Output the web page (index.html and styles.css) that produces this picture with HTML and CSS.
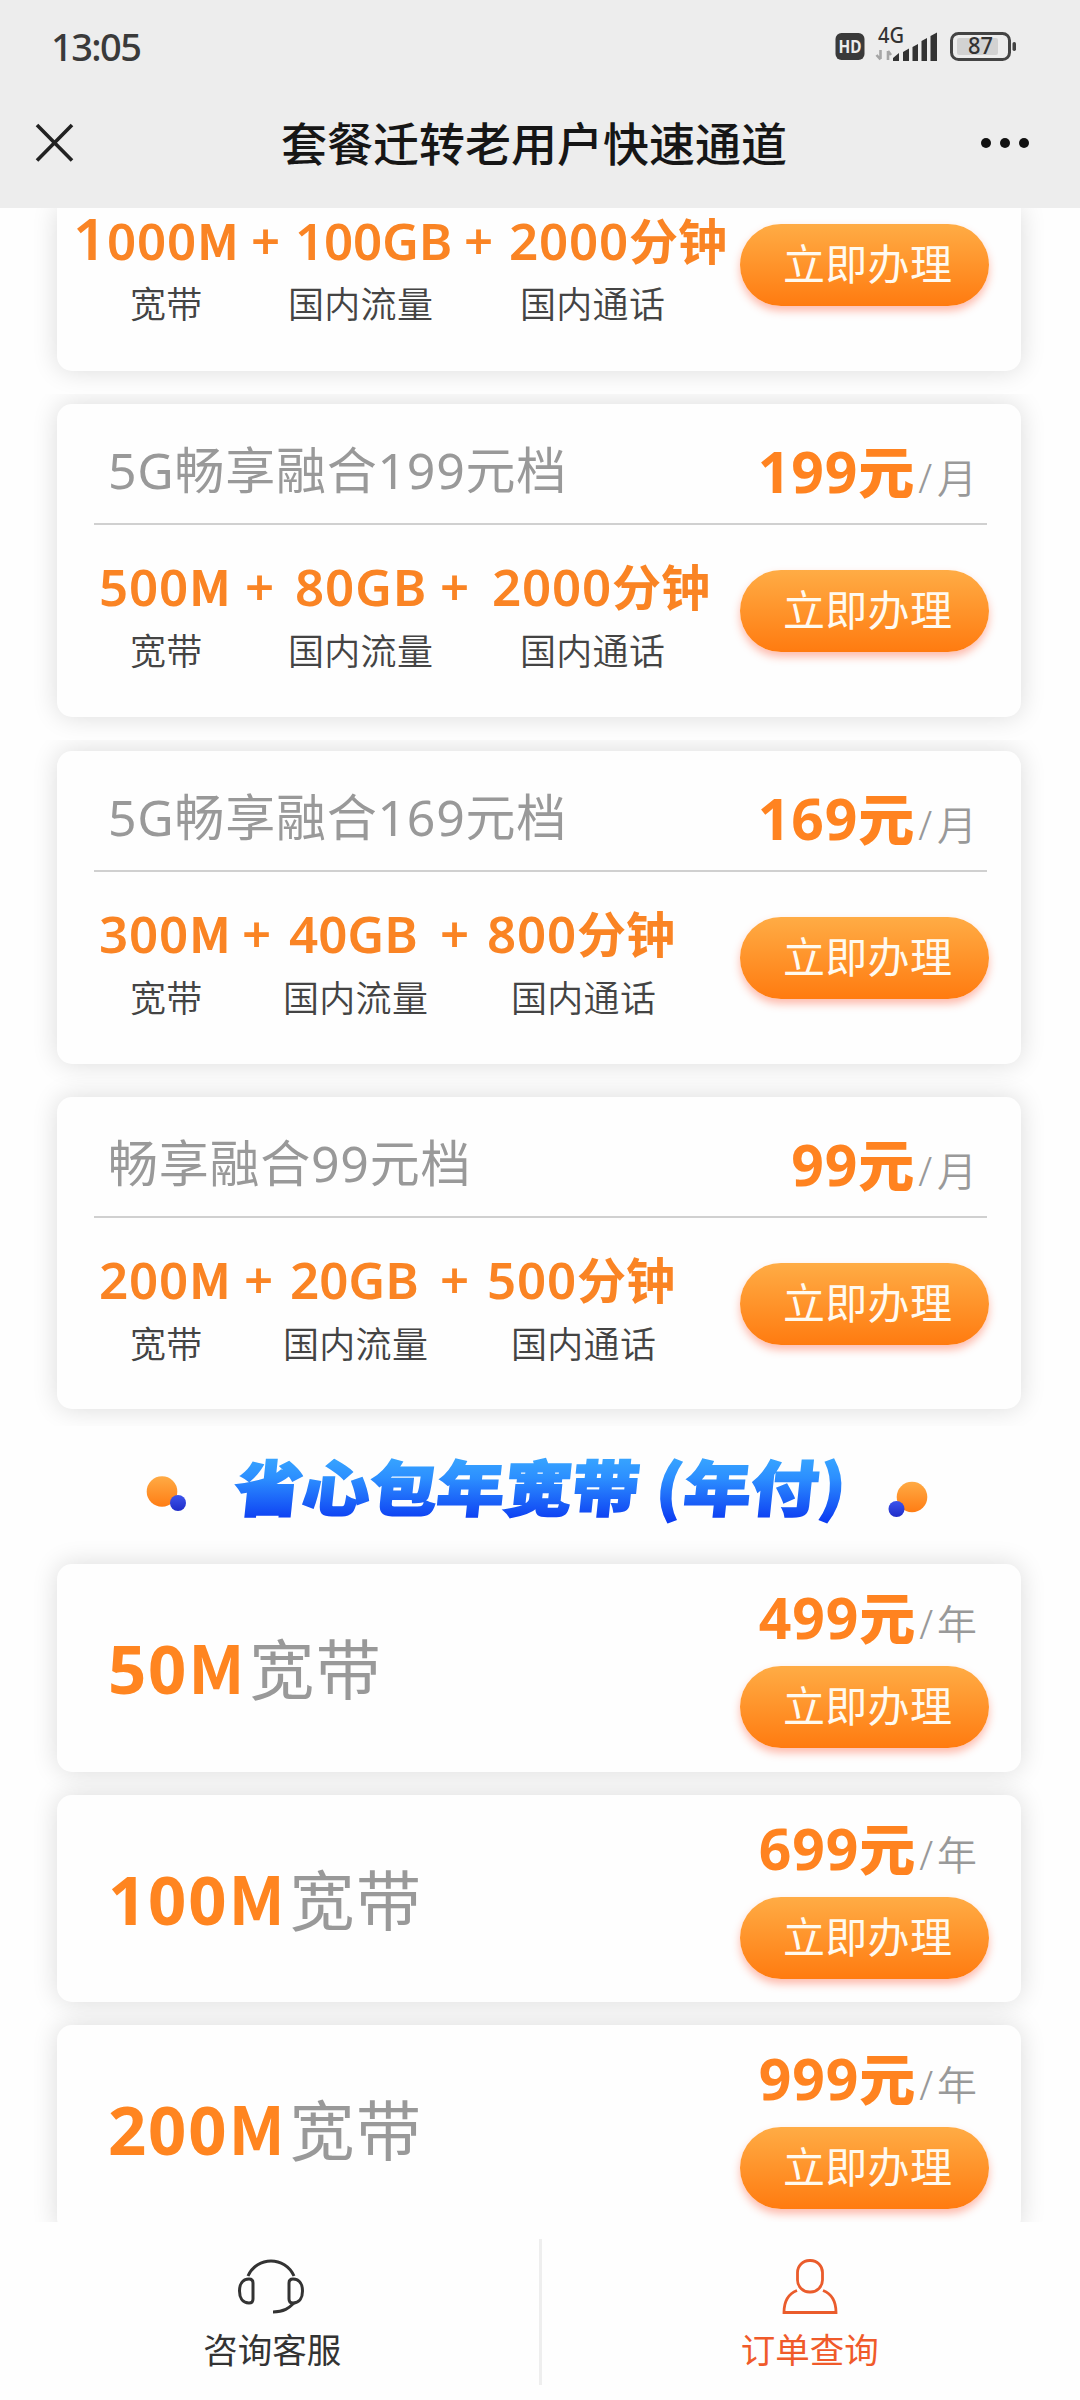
FILE: index.html
```html
<!DOCTYPE html>
<html lang="zh-CN">
<head>
<meta charset="utf-8">
<title>套餐迁转老用户快速通道</title>
<link rel="stylesheet" href="styles.css">
</head>
<body>
<div class="screen">
  <header class="top">
    <div class="status">
      <span class="time">13:05</span>
      <svg class="status-icons" width="190" height="44" viewBox="830 22 190 44">
        <rect x="835.500" y="33" width="29" height="27" rx="6" fill="#3a3a3a"/>
        <text x="850" y="52.500" text-anchor="middle" textLength="23" lengthAdjust="spacingAndGlyphs" class="hd">HD</text>
        <text x="878" y="43" textLength="26" lengthAdjust="spacingAndGlyphs" class="net">4G</text>
        <path d="M880.500 50v9M876.500 55l4 4.500M888 60V51M888 51l3 4" fill="none" stroke="#a5a5a5" stroke-width="2.600"/>
        <path d="M893 61v-3l6-5v8zM903 61v-9l6-3.500v12.500zM912.500 61V47l5.500-3v17zM921.500 61V41l5.500-3v23zM930.500 61V36l6.500-3.500v28.500z" fill="#333"/>
        <rect x="951.500" y="33.500" width="58" height="26" rx="7" fill="none" stroke="#444" stroke-width="3"/>
        <rect x="957" y="38" width="41" height="17" rx="2" fill="#d2d2d2"/>
        <rect x="1012.500" y="42" width="3.500" height="9" rx="1.700" fill="#444"/>
        <text x="980.500" y="54" text-anchor="middle" textLength="25" lengthAdjust="spacingAndGlyphs" class="bat">87</text>
      </svg>
    </div>
    <div class="nav">
      <svg width="40" height="40" viewBox="0 0 40 40"><path d="M2 2l35 35.500M37 2L2 37.500" stroke="#222" stroke-width="3.600" fill="none"/></svg>
      <h1>套餐迁转老用户快速通道</h1>
      <svg width="52" height="12" viewBox="0 0 52 12" fill="#111"><circle cx="7" cy="6" r="5"/><circle cx="26" cy="6" r="5"/><circle cx="45" cy="6" r="5"/></svg>
    </div>
  </header>

  <main class="page">
    <section class="slice slice-a">
      <article class="card cut">
        <div class="body">
          <div class="specs">
            <div class="values v1"><span><big>1</big>000<i>M</i></span><span>+</span><span>100GB</span><span>+</span><span>2000<b>分钟</b></span></div>
            <div class="labels"><span>宽带</span><span>国内流量</span><span>国内通话</span></div>
          </div>
          <a class="btn">立即办理</a>
        </div>
      </article>
    </section>
    <section class="slice slice-b">
      <article class="card">
        <div class="head"><span class="name">5G畅享融合199元档</span><span class="price">199<b>元</b><small>/</small><em>月</em></span></div>
        <div class="body">
          <div class="specs">
            <div class="values v2"><span>500<i>M</i></span><span>+</span><span>80GB</span><span>+</span><span>2000<b>分钟</b></span></div>
            <div class="labels"><span>宽带</span><span>国内流量</span><span>国内通话</span></div>
          </div>
          <a class="btn">立即办理</a>
        </div>
      </article>
    </section>
    <section class="slice slice-c">
      <article class="card">
        <div class="head"><span class="name">5G畅享融合169元档</span><span class="price">169<b>元</b><small>/</small><em>月</em></span></div>
        <div class="body">
          <div class="specs">
            <div class="values v3"><span>300<i>M</i></span><span>+</span><span>40GB</span><span>+</span><span>800<b>分钟</b></span></div>
            <div class="labels tight"><span>宽带</span><span>国内流量</span><span>国内通话</span></div>
          </div>
          <a class="btn">立即办理</a>
        </div>
      </article>
      <article class="card last">
        <div class="head"><span class="name">畅享融合99元档</span><span class="price">99<b>元</b><small>/</small><em>月</em></span></div>
        <div class="body">
          <div class="specs">
            <div class="values v4"><span>200<i>M</i></span><span>+</span><span>20GB</span><span>+</span><span>500<b>分钟</b></span></div>
            <div class="labels tight"><span>宽带</span><span>国内流量</span><span>国内通话</span></div>
          </div>
          <a class="btn">立即办理</a>
        </div>
      </article>
    </section>

    <section class="slice yearly">
      <svg class="banner" width="1080" height="138" viewBox="0 0 1080 138">
        <defs>
          <linearGradient id="blue" gradientUnits="userSpaceOnUse" x1="0" y1="34" x2="0" y2="94"><stop offset="0" stop-color="#36a2ff"/><stop offset=".3" stop-color="#2c8fff"/><stop offset="1" stop-color="#0d3ef2"/></linearGradient>
          <linearGradient id="orange" x1="0" y1="0" x2="0" y2="1"><stop offset="0" stop-color="#ffab45"/><stop offset="1" stop-color="#ff7d14"/></linearGradient>
          <linearGradient id="navy" x1="0" y1="0" x2="0" y2="1"><stop offset="0" stop-color="#3d54ec"/><stop offset="1" stop-color="#1f2cc8"/></linearGradient>
        </defs>
        <circle cx="162" cy="65.500" r="15.300" fill="url(#orange)"/><circle cx="178" cy="77" r="8" fill="url(#navy)"/>
        <circle cx="912" cy="71" r="15.300" fill="url(#orange)"/><circle cx="896.500" cy="83" r="8" fill="url(#navy)"/>
        <g class="heading" fill="url(#blue)" stroke="url(#blue)" transform="translate(7 0) skewX(-6)">
          <text x="235" y="85" textLength="404" lengthAdjust="spacingAndGlyphs">省心包年宽带</text>
          <text x="656" y="84" textLength="26" lengthAdjust="spacingAndGlyphs">(</text>
          <text x="684" y="85" textLength="134" lengthAdjust="spacingAndGlyphs">年付</text>
          <text x="819" y="84" textLength="26" lengthAdjust="spacingAndGlyphs">)</text>
        </g>
      </svg>
      <article class="card year"><div class="speed"><i>50<u>M</u></i>宽带</div><div class="buy"><span class="price">499<b>元</b><small>/</small><em>年</em></span><a class="btn">立即办理</a></div></article>
      <article class="card year"><div class="speed"><i>100<u>M</u></i>宽带</div><div class="buy"><span class="price">699<b>元</b><small>/</small><em>年</em></span><a class="btn">立即办理</a></div></article>
      <article class="card year"><div class="speed"><i>200<u>M</u></i>宽带</div><div class="buy"><span class="price">999<b>元</b><small>/</small><em>年</em></span><a class="btn">立即办理</a></div></article>
    </section>
  </main>

  <footer class="tabs">
    <a class="tab service">
      <svg width="70" height="58" viewBox="0 0 70 58" fill="none" stroke="#333" stroke-width="3"><path d="M12 18C21-2 49-2 58 18"/><path d="M17 25v16q0 4-4 4C6 45 3.500 39 3.500 33S6 21 13 21q4 0 4 4zM53 25v16q0 4 4 4C64 45 66.500 39 66.500 33S64 21 57 21q-4 0-4 4z"/><path d="M58 45C53 50 48 54 37 54"/></svg>
      <span>咨询客服</span>
    </a>
    <i class="rule"></i>
    <a class="tab active">
      <svg width="70" height="58" viewBox="0 0 70 58" fill="none" stroke="#ea5c2c" stroke-width="2.800"><rect x="22.500" y="2.500" width="25" height="31.500" rx="12"/><path d="M22 32.500C13 36 9 43 9 54.500H61C61 43 57 36 48 32.500"/></svg>
      <span>订单查询</span>
    </a>
  </footer>
</div>
</body>
</html>
```

FILE: styles.css
```css
* { box-sizing: border-box; }
body {
  margin: 0;
  background: #fefefe;
  font-family: "Noto Sans", "Noto Sans CJK SC", sans-serif;
}
h1, i, em { margin: 0; font-style: normal; }
u { text-decoration: none; }

.screen { width: 1080px; height: 2400px; display: flex; flex-direction: column; overflow: hidden; }

.top { height: 208px; flex: none; background: #ededed; }
.status { height: 78px; padding: 22px 60px 0 51px; display: flex; justify-content: space-between; }
.time { font-size: 38px; line-height: 48px; font-weight: 500; color: #3a3a3a; letter-spacing: -1.6px; }
.status-icons { flex: none; }
.hd { font: 700 17px "Noto Sans", sans-serif; fill: #ededed; }
.net { font: 500 21px "Noto Sans", sans-serif; fill: #333; }
.bat { font: 500 23px "Noto Sans", sans-serif; fill: #333; }
.nav { height: 130px; padding: 0 49px 0 35px; display: flex; align-items: center; justify-content: space-between; }
.nav h1 { font-size: 46px; font-weight: 500; line-height: 60px; color: #161616; padding-left: 14px; margin-top: -1px; }
.nav > svg { flex: none; }

.page { height: 2014px; flex: none; overflow: hidden; }
.slice { overflow: hidden; padding: 0 59px 0 57px; }
.slice-a { height: 186px; }
.slice-b { height: 346px; padding-top: 10px; }
.slice-c { height: 686px; padding-top: 11px; display: flex; flex-direction: column; gap: 33px; }

.card {
  width: 964px;
  height: 313px;
  flex: none;
  background: #fefefe;
  border-radius: 15px;
  box-shadow: 0 0 26px rgba(0, 0, 0, .14);
}
.card.last { height: 312px; }
.card.cut { height: 163px; border-radius: 0 0 15px 15px; }
/* the first plan is scrolled under the title bar: only its lower part shows */
.cut .specs { padding-top: 0; }
.cut .values { line-height: 64px; }
.cut .labels { padding-top: 0; margin-top: 19px; }
.cut .btn { margin-top: 16px; }
.head {
  height: 121px;
  margin: 0 34px 0 37px;
  padding: 0 9px 0 14px;
  border-bottom: 2px solid #d0d0d0;
  display: flex;
  justify-content: space-between;
}
.name { font-size: 50px; line-height: 132px; letter-spacing: .75px; color: #999; white-space: nowrap; }
.price { font-size: 57px; line-height: 135px; font-weight: 700; color: #ff8320; letter-spacing: .9px; white-space: nowrap; }
.price b { font-size: 56px; line-height: 0; letter-spacing: 0; }
.price small { font-size: 40px; line-height: 0; font-weight: 350; color: #999; margin: 0 4px 0 4px; }
.price em { font-size: 40px; line-height: 0; font-weight: 350; color: #999; }

.body { display: flex; justify-content: space-between; padding-right: 32px; }
.specs { width: 683px; padding-top: 11px; }
.values {
  display: grid;
  font-size: 51px;
  line-height: 100px;
  font-weight: 600;
  color: #fa8424;
  letter-spacing: .8px;
  white-space: nowrap;
}
.values i, .speed u { font-family: "Noto Sans CJK SC", sans-serif; line-height: 0; font-weight: 700; }
.values i { font-size: 49px; }
.values b { font-size: 49px; line-height: 0; font-weight: 600; letter-spacing: 0; }
.values big { font-size: 58px; line-height: 0; }
.v1 { grid-template-columns: 178px 44px 169px 45px 1fr; padding-left: 16px; }
.v1 span:nth-child(3) { letter-spacing: -.2px; }
.v2 { grid-template-columns: 146px 50px 145px 52px 1fr; padding-left: 42px; }
.v3 { grid-template-columns: 143px 47px 151px 47px 1fr; padding-left: 42px; }
.v4 { grid-template-columns: 145px 46px 150px 47px 1fr; padding-left: 42px; }
.v3 span:nth-child(3), .v4 span:nth-child(3) { letter-spacing: 0; }
.labels {
  display: grid;
  grid-template-columns: 158px 232px 1fr;
  padding: 2px 0 0 73px;
  font-size: 36px;
  line-height: 28px;
  font-weight: 350;
  color: #444;
  letter-spacing: .3px;
  white-space: nowrap;
}
.labels.tight { grid-template-columns: 153px 228px 1fr; }

.btn {
  display: block;
  width: 249px;
  height: 82px;
  margin-top: 45px;
  flex: none;
  border-radius: 41px;
  background: linear-gradient(#ffac45, #ff7b10);
  box-shadow: 0 5px 9px rgba(255, 70, 30, .36);
  color: #fffaf0;
  font-size: 42px;
  line-height: 79px;
  letter-spacing: .3px;
  padding-left: 43px;
  white-space: nowrap;
}

.yearly { padding-left: 0; padding-right: 0; }
.banner { display: block; }
.heading { font: 900 60px "Noto Sans CJK SC", sans-serif; stroke-width: 2; }
.year { height: 207.5px; margin: 0 0 23px 57px; display: flex; justify-content: space-between; padding-right: 32px; }
.speed { padding-left: 51px; font-size: 65px; line-height: 210px; color: #999; letter-spacing: 1.5px; white-space: nowrap; }
.speed i { font-size: 67px; line-height: 0; font-weight: 700; color: #ff8520; letter-spacing: 1.8px; margin-right: 3px; }
.speed u { font-size: 66px; }
.buy { width: 249px; display: flex; flex-direction: column; }
.buy .price { height: 102px; line-height: 107px; padding-right: 11px; align-self: flex-end; }
.buy .price small { margin-right: 3px; }
.buy .btn { margin-top: 0; }

.tabs { height: 178px; flex: none; background: #fefefe; display: flex; }
.tab { width: 539px; padding-top: 36px; display: flex; flex-direction: column; align-items: center; font-size: 34.5px; color: #333; }
.tab.service { padding-left: 3px; }
.tab.service span { padding-left: 3px; }
.tab span { line-height: 44px; margin-top: 12px; }
.tab.active { color: #f05a2a; padding-right: 2px; }
.rule { width: 3px; height: 146px; margin-top: 17px; background: #eee; }
```
